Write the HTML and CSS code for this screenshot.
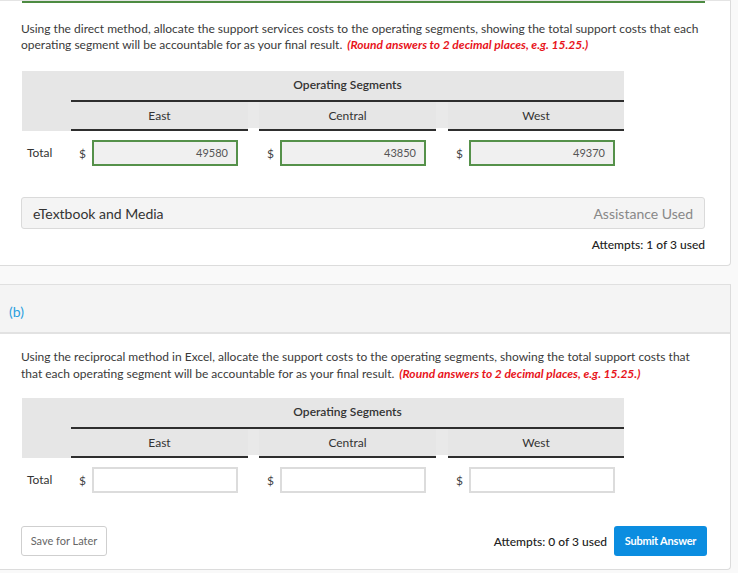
FILE: index.html
```html
<!DOCTYPE html>
<html>
<head>
<meta charset="utf-8">
<link rel="stylesheet" href="styles.css">
</head>
<body>
<div class="card card1">
  <div class="topbar"></div>
  <p class="prompt p1">Using the direct method, allocate the support services costs to the operating segments, showing the total support costs that each operating segment will be accountable for as your final result. <span class="red">(Round answers to 2 decimal places, e.g. 15.25.)</span></p>
  <div class="thead t1">
    <div class="lab"></div>
    <div class="seg">Operating Segments</div>
    <div class="col c-east">East</div>
    <div class="gap g1"></div>
    <div class="col c-central">Central</div>
    <div class="gap g2"></div>
    <div class="col c-west">West</div>
  </div>
  <div class="trow">
    <div class="total">Total</div>
    <div class="cell"><span class="dollar">$</span><div class="inp filled">49580</div></div>
    <div></div>
    <div class="cell"><span class="dollar">$</span><div class="inp filled">43850</div></div>
    <div></div>
    <div class="cell"><span class="dollar">$</span><div class="inp filled">49370</div></div>
  </div>
  <div class="media"><span class="mtitle">eTextbook and Media</span><span class="assist">Assistance Used</span></div>
  <div class="attempts">Attempts: 1 of 3 used</div>
</div>

<div class="card card2">
  <div class="phead"><span class="plabel">(b)</span></div>
  <p class="prompt p2">Using the reciprocal method in Excel, allocate the support costs to the operating segments, showing the total support costs that that each operating segment will be accountable for as your final result. <span class="red">(Round answers to 2 decimal places, e.g. 15.25.)</span></p>
  <div class="thead t2">
    <div class="lab"></div>
    <div class="seg">Operating Segments</div>
    <div class="col c-east">East</div>
    <div class="gap g1"></div>
    <div class="col c-central">Central</div>
    <div class="gap g2"></div>
    <div class="col c-west">West</div>
  </div>
  <div class="trow">
    <div class="total">Total</div>
    <div class="cell"><span class="dollar">$</span><div class="inp empty"></div></div>
    <div></div>
    <div class="cell"><span class="dollar">$</span><div class="inp empty"></div></div>
    <div></div>
    <div class="cell"><span class="dollar">$</span><div class="inp empty"></div></div>
  </div>
  <div class="actions">
    <button class="save">Save for Later</button>
    <div class="right">
      <span class="attempts2">Attempts: 0 of 3 used</span>
      <button class="submit">Submit Answer</button>
    </div>
  </div>
</div>
</body>
</html>
```

FILE: styles.css
```css
* { box-sizing: border-box; }
body {
  margin: 0;
  background: #f9f9f9;
  font-family: Lato, "Open Sans", sans-serif;
  color: #333;
  width: 738px;
}
.card {
  width: 731px;
  background: #fff;
  border: 1px solid #dcdcdc;
  border-left: none;
  border-radius: 0 0 4px 0;
}
.card1 {
  height: 266px;
  border-top-color: #e4e4e4;
}
.topbar {
  height: 2px;
  background: #4d8b42;
  margin: 0 25px 0 22px;
}
.prompt {
  margin: 18px 0 0 21px;
  font-size: 12px;
  line-height: 16px;
  width: 690px;
  color: #3a3a3a;
}
.p2 {
  margin-top: 14px;
  line-height: 17px;
}
.red {
  color: #e8141b;
  font-weight: bold;
  font-style: italic;
  margin-left: 2px;
}
.thead, .trow {
  display: grid;
  grid-template-columns: 49px 177px 11px 177px 12px 176px;
  margin-left: 22px;
  font-size: 12px;
}
.thead { margin-top: 18px; }
.t2 { margin-top: 16px; }
.thead > div { background: #e6e6e6; }
.lab { grid-row: 1 / 3; grid-column: 1; }
.seg {
  grid-row: 1;
  grid-column: 2 / 7;
  height: 31px;
  line-height: 28px;
  border-bottom: 2px solid #2e2e2e;
  text-align: center;
  font-weight: 600;
  color: #333;
}
.col {
  grid-row: 2;
  height: 29px;
  line-height: 27px;
  border-bottom: 2px solid #2e2e2e;
  text-align: center;
  color: #333;
}
.c-east { grid-column: 2; }
.g1 { grid-column: 3; grid-row: 2; }
.c-central { grid-column: 4; }
.g2 { grid-column: 5; grid-row: 2; }
.c-west { grid-column: 6; }
.thead > .gap { background: #e9e9e9; margin-bottom: 3px; }
.trow { margin-top: 9px; height: 26px; }
.total {
  padding-left: 5px;
  line-height: 26px;
}
.cell {
  display: flex;
  align-items: center;
}
.dollar {
  width: 21px;
  padding-left: 8px;
  color: #444;
}
.inp {
  width: 146px;
  height: 26px;
  line-height: 22px;
  text-align: right;
  padding-right: 8px;
  font-size: 11px;
  color: #555;
}
.filled {
  background: #f0f0f0;
  border: 2px solid #55914a;
}
.empty {
  background: #fff;
  border: 2px solid #dcdcdc;
}
.media {
  margin: 31px 25px 0 21px;
  height: 32px;
  background: #f4f4f4;
  border: 1px solid #dadada;
  border-radius: 3px;
  display: flex;
  justify-content: space-between;
  align-items: center;
  padding: 0 11px;
  font-size: 14px;
}
.mtitle { color: #333; }
.assist { color: #888; }
.attempts {
  margin: 8px 25px 0 0;
  text-align: right;
  font-size: 12px;
  line-height: 16px;
  font-weight: 500;
  color: #222;
}
.card2 {
  margin-top: 18px;
  height: 286px;
  border-top-color: #e0e0e0;
}
.phead {
  height: 49px;
  background: #f4f4f4;
  border-bottom: 2px solid #e2e2e2;
  display: flex;
  align-items: center;
  padding: 5px 0 0 9px;
}
.plabel {
  color: #2a9fdf;
  font-size: 14px;
}
.actions {
  margin-top: 33px;
  display: flex;
  justify-content: space-between;
  align-items: center;
  padding: 0 23px 0 21px;
}
.save {
  width: 86px;
  height: 30px;
  background: #fff;
  border: 1px solid #cfcfcf;
  border-radius: 3px;
  font-family: Lato, "Open Sans", sans-serif;
  font-size: 11px;
  color: #666;
  padding: 0 0 1px;
}
.right {
  display: flex;
  align-items: center;
  gap: 7px;
}
.attempts2 {
  font-size: 12px;
  font-weight: 500;
  color: #222;
}
.submit {
  width: 93px;
  height: 30px;
  background: #0b8de0;
  border: none;
  border-radius: 3px;
  color: #fff;
  font-family: Lato, "Open Sans", sans-serif;
  font-size: 11px;
  font-weight: bold;
  letter-spacing: -0.2px;
  padding: 0 0 1px;
}
```
